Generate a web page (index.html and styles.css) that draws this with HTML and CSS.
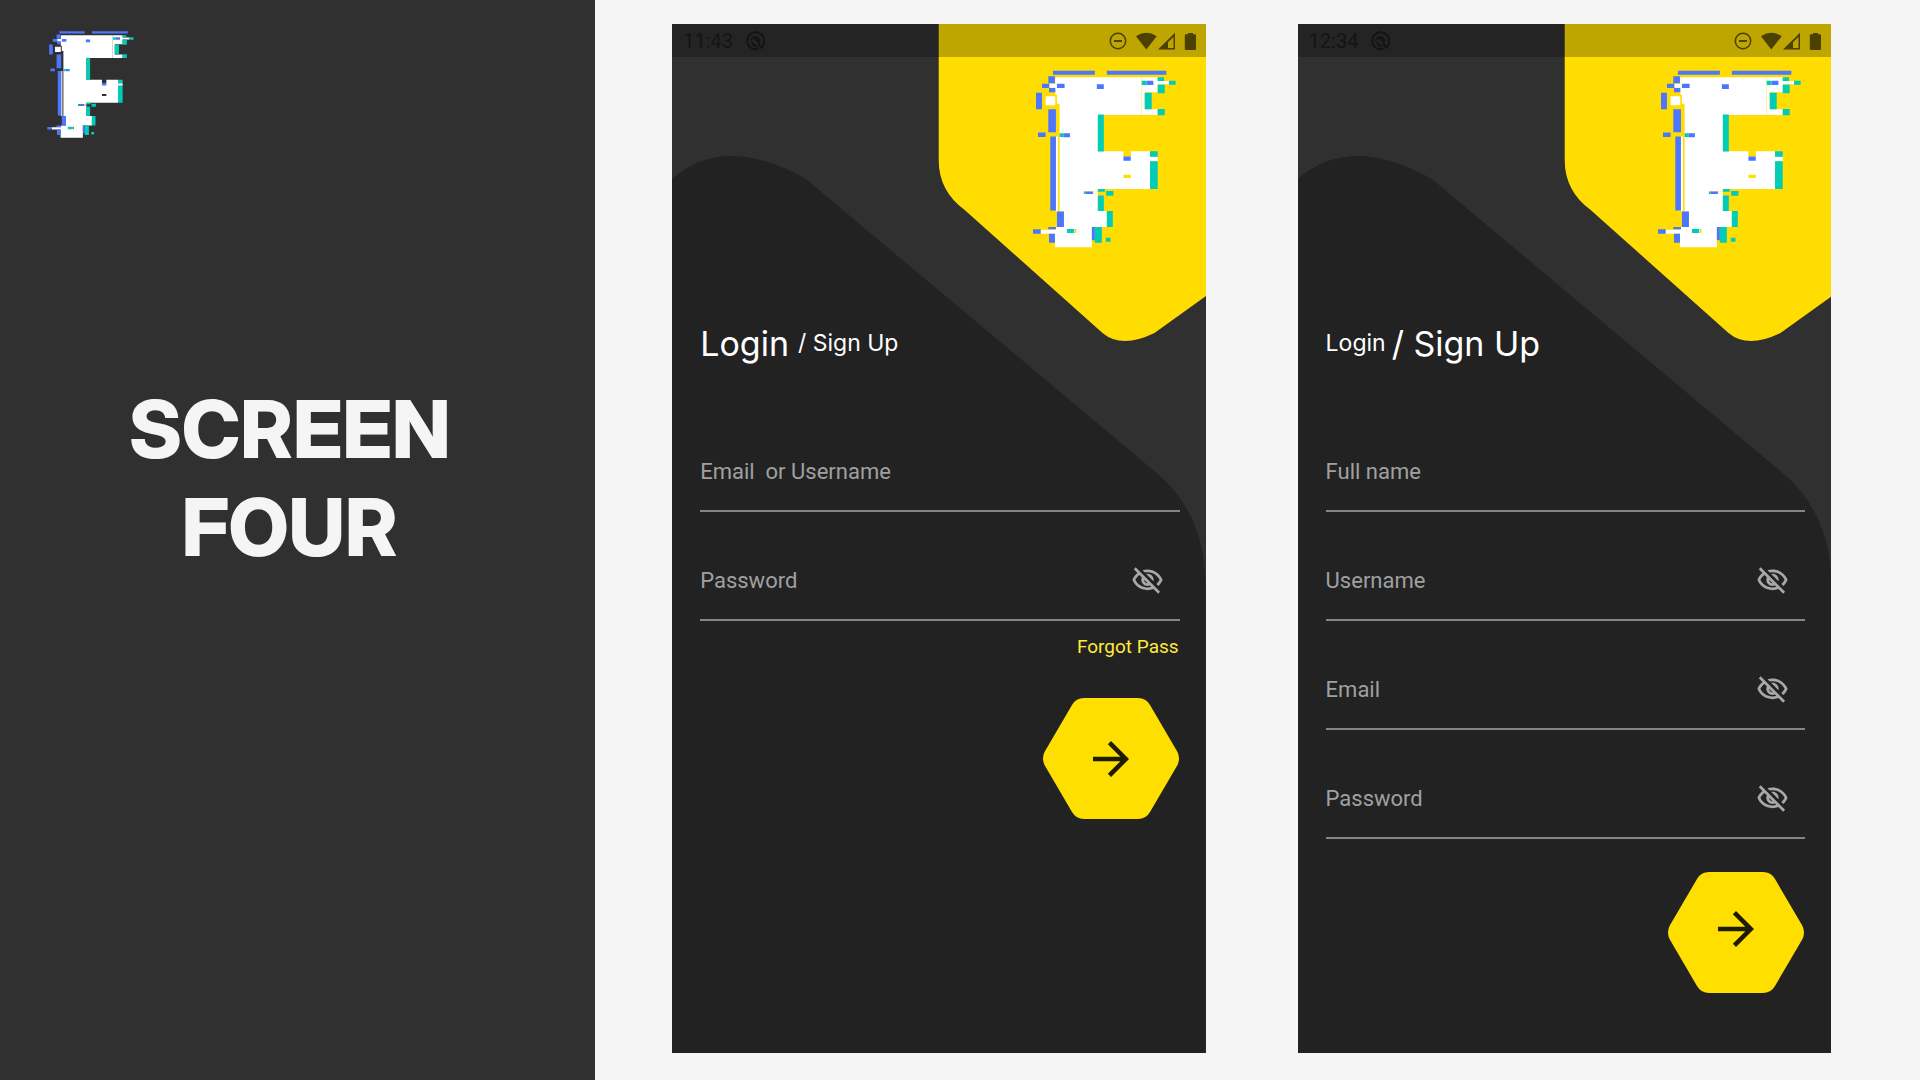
FILE: index.html
```html
<!DOCTYPE html>
<html lang="en">
<head>
<meta charset="utf-8">
<meta name="viewport" content="width=device-width, initial-scale=1">
<title>Screen Four</title>
<link rel="stylesheet" href="styles.css">
</head>
<body>
<svg class="sprite" aria-hidden="true">
  <symbol id="logo" viewBox="69 60 430 533">
    <path fill="#fff" fill-rule="evenodd" d="M136 81H395V194H264V303H341V320H363V303H421V320H444V333H421V417H264V424H222V432H264V483H291V531H246V592H135V551H92V539H136V531H162V484H149V160H141V133H136V112H118V100H136ZM341 374V384H363V374ZM250 425V431H264V425ZM195 537V549H200V537Z"/>
    <path fill="#fff" d="M395.500 81H444V92H478V102H444V126H405V177H444V194H395.500ZM107 138H136V165H107ZM138 259H144V484H138Z"/>
    <path fill="#4d76ff" d="M129 61h126v12h-126zM291 61h179v12h-179zM115 78h20v21h-20zM96 100h22v13h-22zM141 100h23v13h-23zM261 102h21v14h-21zM117 113h19v13h-19zM78 127h18v50h-18zM115 177h23v69h-23zM84 247h23v13h-23zM160 249h20v12h-20zM121 259h17v222h-17zM141 484h21v47h-21zM115 531h23v7h-23zM69 538h23v13h-23zM117 551h18v27h-18zM246 531h9v40h-9zM341 319h22v13h-22zM227 424h22v8h-22zM411 91h20v13h-20z"/>
    <path fill="#00ccb8" d="M396 91h15v13h-15zM444 81h19v11h-19zM444 103h21v26h-21zM478 91h20v12h-20zM405 127h21v50h-21zM444 176h21v19h-21zM264 193h18v111h-18zM149 249h11v11h-11zM421 303h23v17h-23zM421 333h23v84h-23zM222 424h5v8h-5zM264 417h21v8h-21zM289 423h22v14h-22zM264 436h18v47h-18zM291 483h18v48h-18zM171 537h22v12h-22zM255 531h21v47h-21zM288 563h14v12h-14z"/>
  </symbol>
  <symbol id="eye-off" viewBox="0 0 24 24">
    <path fill="currentColor" d="M12 6c3.79 0 7.17 2.13 8.82 5.5-.59 1.22-1.42 2.27-2.41 3.12l1.41 1.41c1.39-1.23 2.49-2.77 3.18-4.53C21.27 7.11 17 4 12 4c-1.27 0-2.49.2-3.64.57l1.65 1.65C10.66 6.09 11.32 6 12 6zm-1.07 1.14L13 9.21c.57.25 1.03.71 1.28 1.28l2.07 2.07c.08-.34.14-.7.14-1.07C16.5 9.01 14.48 7 12 7c-.37 0-.72.05-1.07.14zM2.01 3.87l2.68 2.68C3.06 7.83 1.77 9.53 1 11.5 2.73 15.89 7 19 12 19c1.52 0 2.98-.29 4.32-.82l3.42 3.42 1.41-1.41L3.42 2.45 2.01 3.87zm7.5 7.5l2.61 2.61c-.04.01-.08.02-.12.02-1.38 0-2.5-1.12-2.5-2.5 0-.05.01-.08.01-.13zm-3.4-3.4l1.75 1.75c-.23.55-.36 1.15-.36 1.78 0 2.48 2.02 4.5 4.5 4.5.63 0 1.23-.13 1.77-.36l.98.98c-.88.24-1.8.38-2.75.38-3.79 0-7.17-2.13-8.82-5.5.7-1.43 1.72-2.61 2.93-3.53z"/>
  </symbol>
  <symbol id="hexagon" viewBox="0 0 136 121">
    <path fill="#ffdf00" d="M1.500 54L29 7Q33 0 41 0H95Q103 0 107 7L134.500 54Q137.500 60.500 134.500 67L107 114Q103 121 95 121H41Q33 121 29 114L1.500 67Q-1.500 60.500 1.500 54Z"/>
  </symbol>
  <symbol id="arrow" viewBox="0 0 24 24">
    <path fill="#1f1c05" d="M12 4l-1.410 1.410L16.170 11H4v2h12.170l-5.580 5.590L12 20l8-8z"/>
  </symbol>
  <symbol id="app-badge" viewBox="0 0 20 20">
    <path fill="none" stroke="currentColor" stroke-width="2" d="M16.500 16A8.500 8.500 0 1 0 13.500 17.800"/>
    <path fill="currentColor" d="M5 10.500A5.200 5.200 0 0 1 14.500 7.500C15.600 9.300 15.300 11.500 14.200 13L8.800 7.600ZM6.500 9.800L13 16.200C9.500 17 5.800 14.500 6.500 9.800Z"/>
    <path stroke="currentColor" stroke-width="2" d="M13 13L17.500 17.500"/>
  </symbol>
  <symbol id="status-icons" viewBox="0 0 90 20">
    <circle cx="10" cy="10" r="7.700" fill="none" stroke="currentColor" stroke-width="1.500"/>
    <path fill="currentColor" d="M6 9h8v2H6zM28 5.200Q38.300 -1.500 48.700 5.200L38.300 18.500Z"/>
    <path fill="currentColor" fill-rule="evenodd" d="M50 18.500L67 1.800V18.500ZM60 17H65.500V6L60 11.300Z"/>
    <path fill="currentColor" d="M77.800 3.300H80V2h5v1.300h2q1 0 1 1V18q0 1-1 1h-9.200q-1 0-1-1V4.300q0-1 1-1z"/>
  </symbol>
</svg>

<aside class="side">
  <svg class="side-logo" role="img" aria-label="F logo"><use href="#logo"/></svg>
  <h1 class="side-title">SCREEN<br>FOUR</h1>
</aside>

<main class="stage">
  <section class="phone">
    <svg class="backdrop" viewBox="0 0 534 1029" preserveAspectRatio="none" aria-hidden="true">
      <path fill="#222" d="M0 155Q52 109 134 155L484 448Q534 489 534 562V1029H0Z"/>
      <path fill="#fd0" d="M267 0V136Q267 167 293 186L431 309Q450 325 483 309L536 271V0Z"/>
    </svg>
    <div class="status">
      <span class="time">11:43</span>
      <svg class="app-badge" aria-hidden="true"><use href="#app-badge"/></svg>
      <svg class="status-icons" aria-hidden="true"><use href="#status-icons"/></svg>
    </div>
    <svg class="logo" role="img" aria-label="F logo"><use href="#logo"/></svg>
    <form class="form">
      <h2 class="tabs"><a class="tab tab-active" href="#login">Login</a><a class="tab" href="#signup">/ Sign Up</a></h2>
      <div class="field">
        <label for="login-user">Email&nbsp; or Username</label>
        <input id="login-user" type="text">
      </div>
      <div class="field">
        <label for="login-pass">Password</label>
        <input id="login-pass" type="password">
        <button class="eye" type="button" aria-label="Show password"><svg><use href="#eye-off"/></svg></button>
      </div>
      <a class="forgot" href="#forgot">Forgot Pass</a>
      <button class="submit" type="submit" aria-label="Log in">
        <svg class="hexagon"><use href="#hexagon"/></svg>
        <svg class="arrow"><use href="#arrow"/></svg>
      </button>
    </form>
  </section>

  <section class="phone">
    <svg class="backdrop" viewBox="0 0 534 1029" preserveAspectRatio="none" aria-hidden="true">
      <path fill="#222" d="M0 155Q52 109 134 155L484 448Q534 489 534 562V1029H0Z"/>
      <path fill="#fd0" d="M267 0V136Q267 167 293 186L431 309Q450 325 483 309L536 271V0Z"/>
    </svg>
    <div class="status">
      <span class="time">12:34</span>
      <svg class="app-badge" aria-hidden="true"><use href="#app-badge"/></svg>
      <svg class="status-icons" aria-hidden="true"><use href="#status-icons"/></svg>
    </div>
    <svg class="logo" role="img" aria-label="F logo"><use href="#logo"/></svg>
    <form class="form form-signup">
      <h2 class="tabs"><a class="tab" href="#login">Login</a><a class="tab tab-active" href="#signup">/ Sign Up</a></h2>
      <div class="field">
        <label for="full-name">Full name</label>
        <input id="full-name" type="text">
      </div>
      <div class="field">
        <label for="username">Username</label>
        <input id="username" type="text">
        <button class="eye" type="button" aria-label="Show username"><svg><use href="#eye-off"/></svg></button>
      </div>
      <div class="field">
        <label for="email">Email</label>
        <input id="email" type="email">
        <button class="eye" type="button" aria-label="Show email"><svg><use href="#eye-off"/></svg></button>
      </div>
      <div class="field">
        <label for="password">Password</label>
        <input id="password" type="password">
        <button class="eye" type="button" aria-label="Show password"><svg><use href="#eye-off"/></svg></button>
      </div>
      <button class="submit" type="submit" aria-label="Sign up">
        <svg class="hexagon"><use href="#hexagon"/></svg>
        <svg class="arrow"><use href="#arrow"/></svg>
      </button>
    </form>
  </section>
</main>
</body>
</html>
```

FILE: styles.css
```css
* {
  box-sizing: border-box;
}

body {
  margin: 0;
  min-height: 100vh;
  display: flex;
  background: #f5f5f5;
  font-family: Roboto, sans-serif;
}

svg {
  display: block;
}

.sprite {
  position: absolute;
  width: 0;
  height: 0;
}

.side {
  flex: 0 0 31%;
  padding: 31px 16px 31px 0;
  background: #303030;
}

.side-logo {
  width: 87px;
  height: 107px;
  margin-left: 47px;
}

.side-title {
  margin: 242px 0 0;
  color: #f5f5f5;
  font-family: "Inter Display", Inter, sans-serif;
  font-size: 80px;
  font-weight: 800;
  line-height: 98px;
  text-align: center;
}

.stage {
  flex: 1;
  display: flex;
  gap: 92px;
  padding: 24px 89px 27px 77px;
}

.phone {
  flex: 1 1 0;
  min-width: 0;
  position: relative;
  display: flex;
  flex-direction: column;
  overflow: hidden;
  background: #303030;
}

.backdrop {
  position: absolute;
  inset: 0;
  width: 100%;
  height: 100%;
}

.status {
  position: relative;
  display: flex;
  align-items: center;
  height: 33px;
  padding: 0 8px 0 11px;
  background: rgba(0, 0, 0, 0.25);
  color: #141414;
}

.time {
  font-size: 20px;
  line-height: 24px;
}

.app-badge {
  width: 20px;
  height: 20px;
  margin-left: 12px;
}

.status-icons {
  width: 90px;
  height: 20px;
  margin-left: auto;
  color: #4b4100;
}

.logo {
  position: relative;
  align-self: flex-end;
  width: 143px;
  height: 178px;
  margin: 13px 30px 0 0;
}

.form {
  position: relative;
  display: flex;
  flex-direction: column;
  padding: 75px 26px 0 28px;
}

.tabs {
  display: flex;
  align-items: center;
  gap: 9px;
  height: 40px;
  margin: 0 0 40px;
  font-family: Inter, sans-serif;
  font-weight: 400;
}

.form-signup .tabs {
  gap: 6px;
}

.tab {
  color: #fff;
  font-size: 23px;
  text-decoration: none;
}

.tab-active {
  font-size: 34px;
}

.field {
  display: flex;
  align-items: center;
  height: 109px;
  padding: 54px 16px 25px 0;
  border-bottom: 2px solid #858585;
  color: #a0a0a0;
  font-size: 22px;
}

.field input {
  flex: 1;
  min-width: 0;
  padding: 0;
  border: 0;
  outline: 0;
  background: none;
  color: #fff;
  font: inherit;
}

.eye {
  padding: 0;
  border: 0;
  background: none;
  color: #a8a8a8;
}

.eye svg {
  width: 33px;
  height: 33px;
}

.forgot {
  align-self: flex-end;
  margin: 14px 1px 0 0;
  color: #ffeb3b;
  font-size: 19px;
  line-height: 24px;
  text-decoration: none;
}

.submit {
  align-self: flex-end;
  display: grid;
  place-items: center;
  margin: 39px 1px 0 0;
  padding: 0;
  border: 0;
  background: none;
}

.form-signup .submit {
  margin-top: 33px;
}

.hexagon,
.arrow {
  grid-area: 1 / 1;
}

.hexagon {
  width: 136px;
  height: 121px;
}

.arrow {
  width: 54px;
  height: 54px;
}

.form-signup .arrow {
  margin-bottom: 8px;
}
```
